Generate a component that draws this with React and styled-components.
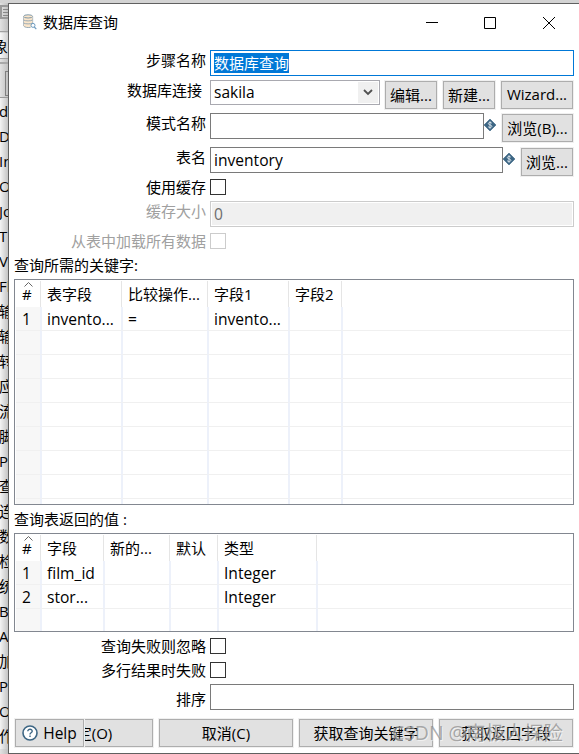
import React, { useState } from "react";
import styled, { createGlobalStyle } from "styled-components";

const steps = [
  "d", "D", "In", "O", "Jo", "T", "V", "Fl", "输", "输", "转", "应", "流",
  "脚", "P", "查", "连", "数", "检", "统", "B", "A", "加", "P", "O", "作",
];

const keyColumns = [
  { title: "#", width: 24 },
  { title: "表字段", width: 81 },
  { title: "比较操作...", width: 86 },
  { title: "字段1", width: 81 },
  { title: "字段2", width: 53 },
  { title: "" },
];

const keyRows = [["1", "invento...", "=", "invento...", "", ""]];

const valueColumns = [
  { title: "#", width: 24 },
  { title: "字段", width: 63 },
  { title: "新的...", width: 66 },
  { title: "默认", width: 48 },
  { title: "类型", width: 99 },
  { title: "" },
];

const valueRows = [
  ["1", "film_id", "", "", "Integer", ""],
  ["2", "stor...", "", "", "Integer", ""],
];

const DatabaseIcon = () => (
  <svg width="15" height="17" viewBox="0 0 15 17">
    <path d="M.5 3v8.8c0 1.2 2 1.7 4.6 1.7s4.6-.5 4.6-1.7V3z" fill="#fbe6cb" />
    <path d="M.5 3v8.8M9.7 3v6" stroke="#a9b4ba" strokeWidth=".8" />
    <ellipse cx="5.1" cy="2.4" rx="4.5" ry="1.6" fill="#fbe6cb" stroke="#7f99aa" />
    <path
      d="M.6 6c1.6 1.2 7.4 1.2 9 0M.6 9c1.6 1.2 7.4 1.2 9 0M.6 11.8c.8 1.8 5 2 7 1.5"
      fill="none"
      stroke="#8ea3b0"
      strokeWidth=".9"
    />
    <circle cx="10" cy="11.4" r="2" fill="#fff" stroke="#6f9cc0" />
    <path d="M11.3 13l2 2.2" stroke="#6f9cc0" strokeWidth="1.2" />
  </svg>
);

const VariableIcon = () => (
  <Diamond width="12" height="12" viewBox="0 0 12 12">
    <path d="M6 0l6 6-6 6-6-6z" fill="#3d6684" stroke="#3d6684" strokeWidth=".6" />
    <path
      d="M7.8 4.2C7.2 3.2 4.3 3.1 4.3 4.7c0 1.5 3.6 1 3.6 2.6 0 1.5-3 1.5-3.8.4M6 2.2v7.6"
      fill="none"
      stroke="#dfe8ee"
      strokeWidth=".9"
    />
  </Diamond>
);

const Grid = ({ columns, rows, height, blanks }) => {
  const lines = [...rows, ...Array(blanks).fill(columns.map(() => ""))];

  return (
    <GridCtn $height={height}>
      <SortMark width="9" height="5" viewBox="0 0 9 5">
        <path d="M.5 4.5l4-4 4 4" fill="none" stroke="#666" />
      </SortMark>
      <GridLine>
        {columns.map((col, i) => (
          <HeadCell key={i} $width={col.width}>
            {col.title}
          </HeadCell>
        ))}
      </GridLine>
      {lines.map((line, r) => (
        <GridLine key={r}>
          {line.map((value, i) => (
            <Cell key={i} $width={columns[i].width}>
              {value}
            </Cell>
          ))}
        </GridLine>
      ))}
    </GridCtn>
  );
};

const App = () => {
  const [cache, setCache] = useState(false);
  const [ignore, setIgnore] = useState(false);
  const [multi, setMulti] = useState(false);

  return (
    <Desktop>
      <GlobalStyle />
      <Backdrop>
        <Toolbar>
          <svg width="8" height="14" viewBox="0 0 8 14">
            <path d="M8 1H1v12h7" fill="none" stroke="#999" strokeWidth="2" />
            <path d="M3 4.5h5M3 7.5h5M3 10.5h5" fill="none" stroke="#888" />
          </svg>
        </Toolbar>
        <Tab>象</Tab>
        <SearchBar>
          <SearchBox />
        </SearchBar>
        <Tree>
          {steps.map((step, i) => (
            <TreeItem key={i}>{step}</TreeItem>
          ))}
        </Tree>
      </Backdrop>

      <Dialog>
        <TitleBar>
          <DatabaseIcon />
          <Title>数据库查询</Title>
          <svg width="130" height="14" viewBox="0 0 130 14">
            <g fill="none" stroke="#000">
              <path d="M0 6.5h12" />
              <path d="M58.5 1.5h11v11h-11z" />
              <path d="M117 1l12 12M129 1l-12 12" />
            </g>
          </svg>
        </TitleBar>

        <Row $height={30}>
          <Label>步骤名称</Label>
          <Field $focus>
            <Selected>数据库查询</Selected>
          </Field>
        </Row>
        <Row $height={33}>
          <Label $shift={8}>数据库连接</Label>
          <Combo>
            sakila
            <Arrow>
              <svg width="10" height="7" viewBox="0 0 10 7">
                <path d="M1 1l4 4 4-4" fill="none" stroke="#505050" strokeWidth="1.8" />
              </svg>
            </Arrow>
          </Combo>
          <Button $width={52} $gap={5}>编辑...</Button>
          <Button $width={52} $gap={6}>新建...</Button>
          <Button $width={72} $gap={6}>Wizard...</Button>
        </Row>
        <Row $height={34}>
          <Label>模式名称</Label>
          <Field />
          <VariableIcon />
          <Button $width={71} $gap={6}>浏览(B)...</Button>
        </Row>
        <Row $height={32}>
          <Label>表名</Label>
          <Field>inventory</Field>
          <VariableIcon />
          <Button $width={52} $gap={6}>浏览...</Button>
        </Row>
        <Row $height={22}>
          <Label $line={17}>使用缓存</Label>
          <Check checked={cache} onChange={() => setCache(!cache)} />
        </Row>
        <Row $height={32}>
          <Label $disabled>缓存大小</Label>
          <Field $disabled>0</Field>
        </Row>
        <Row $height={22}>
          <Label $disabled $line={17}>从表中加载所有数据</Label>
          <Check disabled />
        </Row>

        <Caption $height={24} $line={20}>查询所需的关键字:</Caption>
        <Grid columns={keyColumns} rows={keyRows} height={226} blanks={8} />
        <Caption $height={28} $line={28}>查询表返回的值 :</Caption>
        <Grid columns={valueColumns} rows={valueRows} height={99} blanks={1} />

        <Options>
          <Row $height={24}>
            <Label $line={17}>查询失败则忽略</Label>
            <Check checked={ignore} onChange={() => setIgnore(!ignore)} />
          </Row>
          <Row $height={22}>
            <Label $line={17}>多行结果时失败</Label>
            <Check checked={multi} onChange={() => setMulti(!multi)} />
          </Row>
          <Row $height={34}>
            <Label $line={31}>排序</Label>
            <Field />
          </Row>
        </Options>

        <Footer>
          <HelpButton $width={69}>
            <svg width="16" height="16" viewBox="0 0 16 16">
              <circle cx="8" cy="8" r="7" fill="#fff" stroke="#3d6684" strokeWidth="1.6" />
              <path
                d="M5.8 6.3c0-2.9 4.5-2.7 4.4-.1 0 1.6-2.2 1.5-2.2 3.2M8 10.6v1.5"
                fill="none"
                stroke="#3d6684"
                strokeWidth="1.4"
              />
            </svg>
            <span>Help</span>
          </HelpButton>
          <OkButton $width={134}>确定(O)</OkButton>
          <Button $width={134} $gap={6}>取消(C)</Button>
          <Button $width={134} $gap={6}>获取查询关键字</Button>
          <Button $width={134} $gap={6}>获取返回字段</Button>
        </Footer>
      </Dialog>
      <Watermark>CSDN @南极人探险</Watermark>
    </Desktop>
  );
};

const GlobalStyle = createGlobalStyle`
  * {
    box-sizing: border-box;
  }

  body {
    margin: 0;
    overflow: hidden;
    font-family: "Open Sans", "Noto Sans CJK SC", sans-serif;
    font-size: 15px;
    color: #000;
  }

  svg {
    display: block;
    flex: none;
  }
`;

const Desktop = styled.div`
  position: relative;
  display: flex;
  width: 579px;
  height: 754px;
  padding-top: 3px;
  overflow: hidden;
  background: #d3d3d3;
`;

const Backdrop = styled.div`
  width: 8px;
  flex: none;
  overflow: hidden;
  background: linear-gradient(to right, #e2e2e2, #c0c0c0);
`;

const Toolbar = styled.div`
  height: 29px;
  padding-top: 2px;
  border-bottom: 1px solid #a0a0a0;
`;

const Tab = styled.div`
  height: 26px;
  margin-top: 1px;
  line-height: 26px;
  text-indent: -7px;
  border-bottom: 1px solid #a0a0a0;
  background: linear-gradient(to right, #f8f8f8, #d0d0d0);
`;

const SearchBar = styled.div`
  height: 36px;
  padding: 7px 0 0 5px;
  border-top: 2px solid #a8a8a8;
  border-bottom: 1px solid #999;
  margin-top: 3px;
`;

const SearchBox = styled.div`
  width: 20px;
  height: 25px;
  border: 1px solid #808080;
`;

const Tree = styled.div`
  padding-top: 1px;
  background: linear-gradient(to right, #f4f4f4, #c4c4c4);
`;

const TreeItem = styled.div`
  height: 25px;
  line-height: 25px;
  text-indent: -1px;
  white-space: nowrap;
`;

const Dialog = styled.div`
  width: 580px;
  height: 751px;
  flex: none;
  padding-left: 5px;
  border: 1px solid #606060;
  background: #fff;
`;

const TitleBar = styled.div`
  display: flex;
  align-items: center;
  height: 46px;
  padding: 0 0 9px 9px;
`;

const Title = styled.div`
  width: 383px;
  margin-left: 5px;
  padding-bottom: 2px;
`;

const Row = styled.div`
  display: flex;
  align-items: flex-start;
  width: 560px;
  height: ${(p) => p.$height}px;
`;

const Label = styled.div`
  width: 196px;
  flex: none;
  padding-right: ${(p) => p.$shift || 4}px;
  line-height: ${(p) => p.$line || 20}px;
  text-align: right;
  color: ${(p) => (p.$disabled ? "#a0a0a0" : "#000")};
`;

const Field = styled.div`
  flex: 1;
  height: 26px;
  padding: ${(p) => (p.$focus ? "2px 3px" : "0 3px")};
  font-size: 15.6px;
  line-height: 25px;
  border: 1px solid ${(p) => (p.$focus ? "#0078d7" : p.$disabled ? "#ccc" : "#7a7a7a")};
  background: ${(p) => (p.$disabled ? "#f0f0f0" : "#fff")};
  box-shadow: ${(p) => (p.$disabled ? "inset 0 0 0 1px #fff" : "none")};
  color: ${(p) => (p.$disabled ? "#6d6d6d" : "#000")};
`;

const Selected = styled.span`
  display: inline-block;
  height: 20px;
  font-size: 15px;
  line-height: 20px;
  vertical-align: top;
  color: #fff;
  background: #0078d7;
`;

const Combo = styled.div`
  display: flex;
  justify-content: space-between;
  width: 170px;
  height: 25px;
  padding: 1px 1px 1px 3px;
  font-size: 15.5px;
  line-height: 21px;
  border: 1px solid #a9a9b0;
`;

const Arrow = styled.div`
  display: flex;
  align-items: center;
  justify-content: center;
  width: 20px;
  background: #f0f0f0;
`;

const Button = styled.button`
  display: flex;
  align-items: center;
  justify-content: center;
  flex: none;
  width: ${(p) => p.$width}px;
  height: 28px;
  margin: 1px 0 0 ${(p) => p.$gap || 0}px;
  padding: 0 0 2px;
  font: inherit;
  color: #000;
  white-space: nowrap;
  border: 1px solid #adadad;
  background: #e1e1e1;
  box-shadow: 0 0 0 1px #f0f0f0;

  ${Row} &:last-child {
    margin-right: 1px;
  }
`;

const Diamond = styled.svg`
  margin-top: 6px;
`;

const Check = styled.input.attrs({ type: "checkbox" })`
  appearance: none;
  width: 16px;
  height: 16px;
  margin: 0;
  border: 1px solid ${(p) => (p.disabled ? "#ccc" : "#333")};
  background: #fff;

  &:checked {
    background: #333;
    box-shadow: inset 0 0 0 3px #fff;
  }
`;

const Caption = styled.div`
  height: ${(p) => p.$height}px;
  line-height: ${(p) => p.$line}px;
`;

const GridCtn = styled.div`
  position: relative;
  width: 560px;
  height: ${(p) => p.$height}px;
  padding: 1px;
  overflow: hidden;
  border: 1px solid #828790;
`;

const SortMark = styled.svg`
  position: absolute;
  top: 2px;
  left: 9px;
`;

const GridLine = styled.div`
  display: flex;
`;

const HeadCell = styled.div`
  width: ${(p) => p.$width || 232}px;
  flex: ${(p) => (p.$width ? "none" : 1)};
  height: 26px;
  padding-left: 6px;
  line-height: 27px;
  white-space: nowrap;
  border-left: 1px solid #e5e5e5;

  &:first-child {
    border-left: none;
  }
`;

const Cell = styled.div`
  width: ${(p) => p.$width || 232}px;
  flex: ${(p) => (p.$width ? "none" : 1)};
  height: 24px;
  padding-left: 5px;
  font-size: 15.6px;
  line-height: 24px;
  white-space: nowrap;
  border-left: 2px solid #edf1fa;
  border-bottom: 1px solid #f0f0f0;

  &:first-child {
    padding-left: 6px;
    border-left: none;
    background: #f7f7f7;
  }
`;

const Options = styled.div`
  padding-top: 6px;
`;

const Footer = styled.div`
  display: flex;
  width: 560px;
  padding-left: 1px;
`;

const HelpButton = styled(Button)`
  position: relative;
  z-index: 1;
  gap: 5px;
  padding: 0;
  font-size: 15.5px;
`;

// the dialog is too narrow, so Help sits on top of the OK button
const OkButton = styled(Button)`
  margin-left: -65px;
  padding-left: 2px;
`;

const Watermark = styled.div`
  position: absolute;
  left: 392px;
  top: 718px;
  font-size: 19.4px;
  line-height: 30px;
  white-space: nowrap;
  color: rgba(130, 130, 130, 0.65);
  text-shadow: 1px 1px 0 rgba(255, 255, 255, 0.5);
  pointer-events: none;
`;

export default App;
